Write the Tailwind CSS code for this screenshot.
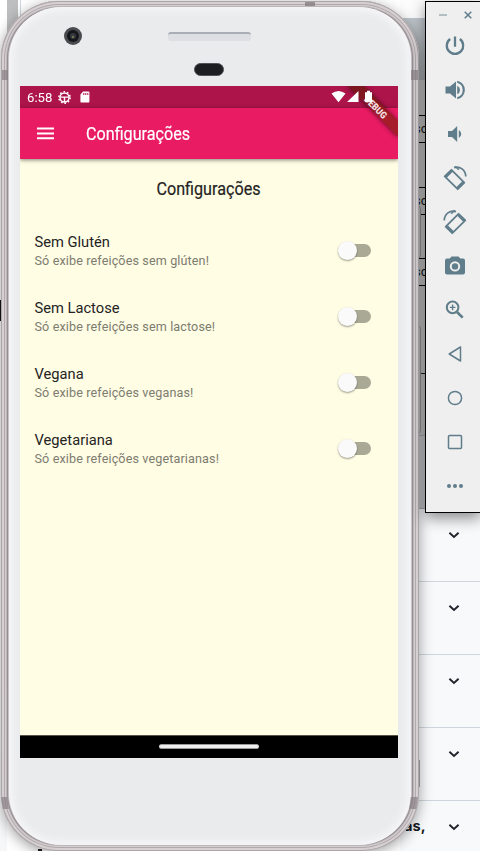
<!DOCTYPE html>
<html lang="pt-BR">
<head>
<meta charset="utf-8">
<title>Configurações</title>
<script src="https://cdn.jsdelivr.net/npm/@tailwindcss/browser@4"></script>
</head>
<body class="relative h-[851px] w-[480px] overflow-hidden bg-white font-['Roboto',sans-serif]">

<!-- Desktop behind the emulator -->
<div class="absolute inset-0 flex justify-between">
  <div class="flex h-full w-[60px]">
    <div class="w-[7px] bg-gradient-to-b from-white from-80% to-[#f6f7f9]"></div>
    <div class="h-[100px] w-[11px] bg-[#bdbebf]"></div>
    <div class="ml-[2px] h-[100px] w-px bg-[#cbd6e2]"></div>
  </div>
  <div class="flex h-full w-[80px] flex-col">
    <div class="h-[19px] shrink-0 border-b border-[#bfc8cf] bg-[#fcfcfc]"></div>
    <div class="h-[61px] shrink-0 bg-gradient-to-b from-[#c0c7cc] to-[#a8adb1]"></div>
    <div class="h-[355px] shrink-0 bg-[#c6c6c6] pl-[14px] text-[13px] leading-[26px] text-[#151515]">
      <div class="mt-[35px] h-[28px] border-y border-black">sc</div>
      <div class="mt-[44px] h-[28px] border-y border-black">sc</div>
      <div class="mt-[43px] h-[28px] border-y border-black">sc</div>
      <div class="mt-[87px] h-px bg-[#17202b]"></div>
    </div>
    <div class="h-[74px] shrink-0 border-y border-[#a9adb1] bg-[#cbccce]"></div>
    <div class="h-[365px] shrink-0 bg-[#f7f9fb]">
      <div class="flex h-[73px] items-center border-b border-[#cfd5dc] pl-[48px]"><svg class="-mt-[21px]" width="12" height="8" viewBox="0 0 12 8" fill="none" stroke="#20242a" stroke-width="1.9"><path d="M1.4 1.8 6 6l4.6-4.2"/></svg></div>
      <div class="flex h-[73px] items-center border-b border-[#cfd5dc] pl-[48px]"><svg class="-mt-[21px]" width="12" height="8" viewBox="0 0 12 8" fill="none" stroke="#20242a" stroke-width="1.9"><path d="M1.4 1.8 6 6l4.6-4.2"/></svg></div>
      <div class="flex h-[73px] items-center border-b border-[#cfd5dc] pl-[48px]"><svg class="-mt-[21px]" width="12" height="8" viewBox="0 0 12 8" fill="none" stroke="#20242a" stroke-width="1.9"><path d="M1.4 1.8 6 6l4.6-4.2"/></svg></div>
      <div class="flex h-[73px] items-center border-b border-[#cfd5dc] pl-[48px]"><svg class="-mt-[21px]" width="12" height="8" viewBox="0 0 12 8" fill="none" stroke="#20242a" stroke-width="1.9"><path d="M1.4 1.8 6 6l4.6-4.2"/></svg></div>
      <div class="flex h-[73px] items-center"><b class="-mt-[22px] w-[48px] pl-[4px] font-['Inter',sans-serif] text-[14.6px] text-[#17191c]">as,</b><svg class="-mt-[21px]" width="12" height="8" viewBox="0 0 12 8" fill="none" stroke="#20242a" stroke-width="1.9"><path d="M1.4 1.8 6 6l4.6-4.2"/></svg></div>
    </div>
  </div>
</div>
<div class="absolute left-0 top-[300px] h-[21px] w-[3px] bg-[#151515]"></div>
<div class="absolute left-[38px] top-[849px] h-[2px] w-[4px] bg-[#201c20]"></div>

<!-- Side buttons -->
<div class="absolute left-[416px] top-[205px] h-[54px] w-[5px] rounded-r-sm border border-[#999] bg-[#c9c7c7]"></div>
<div class="absolute left-[416px] top-[325px] h-[109px] w-[5px] rounded-r-sm border border-[#999] bg-[#c9c7c7]"></div>
<div class="absolute left-[417px] top-[760px] h-[27px] w-[3px] bg-[#aaa3a7]"></div>

<!-- Phone -->
<div class="absolute left-[1px] top-[1px] flex h-[850px] w-[418px] flex-col rounded-[58px] bg-[#cbc4c7] p-[8px] pb-[6px] pt-[6px] shadow-[0_3px_14px_rgba(0,0,0,0.38),inset_0_0_0_1px_#aca5a8,inset_0_0_0_3px_#d6d0d2,inset_0_0_0_4px_#b0a9ac,inset_0_0_0_5px_#d4ced0,inset_0_0_0_6px_#bdb6b9,inset_0_0_0_7px_#958e92]">
  <div class="flex flex-1 flex-col rounded-[52px] bg-[#eaebed] px-[11px] shadow-[inset_0_0_8px_3px_#f8f8fa]">
    <div class="relative h-[79px] shrink-0">
      <div class="absolute left-[44px] top-[20px] flex size-[18px] items-center justify-center rounded-full bg-[#4a4b4e]"><div class="flex size-[12px] items-center justify-center rounded-full bg-[#15171a]"><div class="size-[6px] rounded-full bg-[#353a42]"><div class="ml-[2px] mt-[3px] size-[2px] bg-[#777348]"></div></div></div></div>
      <div class="absolute left-[148px] top-[25px] h-[9px] w-[83px] rounded-[3px] border-t-2 border-[#a9adb6] bg-[#dddfe2]"></div>
      <div class="absolute left-[174px] top-[56px] h-[13px] w-[30px] rounded-full border border-[#505258] bg-[#1d1e22]"></div>
    </div>

    <main class="relative flex h-[672px] w-[378px] shrink-0 flex-col overflow-hidden bg-[#fffde4]">
      <div class="flex h-[22px] shrink-0 items-center bg-[#ad1449] pl-[7px] text-[13.6px] text-white">
        <span class="w-[31px] origin-left scale-x-[0.97]">6:58</span>
        <svg width="13" height="13" viewBox="0 0 13 13" fill="none" stroke="white"><circle cx="6.5" cy="6.5" r="4.5" stroke-width="1.5"/><circle cx="6.5" cy="6.5" r="5.7" stroke-width="1.4" stroke-dasharray="1.7 1.88"/><path d="M2.5 6.1h8M6.5 6.5v4.4" stroke-width="1.4"/></svg>
        <svg class="ml-[9px]" width="10" height="12" viewBox="0 0 10 12" fill="white"><path fill-rule="evenodd" d="M3 .5h5.6q.8 0 .8.8v9.4q0 .8-.8.8H1.2q-.8 0-.8-.8V3.4ZM3.3 2v2h1V2Zm2 0v2h1V2Zm2 0v2h1V2Z"/></svg>
      </div>
      <header class="relative z-10 flex h-[51px] shrink-0 items-center bg-[#e91b62] text-white shadow-[0_1px_4px_rgba(0,0,0,0.5)]">
        <svg class="ml-[17px]" width="17" height="13" viewBox="0 0 17 13" fill="white"><path d="M0 .6h17v2H0zM0 5.4h17v2H0zM0 10.2h17v2H0z"/></svg>
        <h1 class="ml-[32px] mt-[2px] origin-left scale-x-[0.86] whitespace-nowrap text-[18.8px] leading-none [-webkit-text-stroke:0.2px_white]">Configurações</h1>
      </header>
      <section class="flex h-[576px] shrink-0 flex-col">
        <h2 class="mt-[20px] flex h-[20px] origin-center -translate-x-[0.5px] scale-x-[0.86] items-center justify-center text-[18.8px] leading-none text-[#24231f] [-webkit-text-stroke:0.2px_#24231f]">Configurações</h2>
        <div class="mt-[18px] flex flex-col pl-[14.5px] pr-[27px]">
          <div class="flex h-[66px] items-center justify-between"><div class="pt-[2px]"><div class="text-[14.7px] leading-[19px] text-[#24231f]">Sem Glutén</div><div class="text-[12.6px] leading-[18px] tracking-[0.12px] text-[#7d7c70]">Só exibe refeições sem glúten!</div></div><div class="flex h-[13px] w-[31px] items-center rounded-full bg-[#aaa996]"><i class="-ml-[2px] size-[19px] rounded-full bg-[#fafafa] shadow-[0_1px_2px_rgba(0,0,0,0.4)]"></i></div></div>
          <div class="flex h-[66px] items-center justify-between"><div class="pt-[2px]"><div class="text-[14.7px] leading-[19px] text-[#24231f]">Sem Lactose</div><div class="text-[12.6px] leading-[18px] tracking-[0.12px] text-[#7d7c70]">Só exibe refeições sem lactose!</div></div><div class="flex h-[13px] w-[31px] items-center rounded-full bg-[#aaa996]"><i class="-ml-[2px] size-[19px] rounded-full bg-[#fafafa] shadow-[0_1px_2px_rgba(0,0,0,0.4)]"></i></div></div>
          <div class="flex h-[66px] items-center justify-between"><div class="pt-[2px]"><div class="text-[14.7px] leading-[19px] text-[#24231f]">Vegana</div><div class="text-[12.6px] leading-[18px] tracking-[0.12px] text-[#7d7c70]">Só exibe refeições veganas!</div></div><div class="flex h-[13px] w-[31px] items-center rounded-full bg-[#aaa996]"><i class="-ml-[2px] size-[19px] rounded-full bg-[#fafafa] shadow-[0_1px_2px_rgba(0,0,0,0.4)]"></i></div></div>
          <div class="flex h-[66px] items-center justify-between"><div class="pt-[2px]"><div class="text-[14.7px] leading-[19px] text-[#24231f]">Vegetariana</div><div class="text-[12.6px] leading-[18px] tracking-[0.12px] text-[#7d7c70]">Só exibe refeições vegetarianas!</div></div><div class="flex h-[13px] w-[31px] items-center rounded-full bg-[#aaa996]"><i class="-ml-[2px] size-[19px] rounded-full bg-[#fafafa] shadow-[0_1px_2px_rgba(0,0,0,0.4)]"></i></div></div>
        </div>
      </section>
      <div class="flex h-[23px] shrink-0 justify-center border-t border-[#555448] bg-black pt-[8px]"><div class="h-[5px] w-[100px] rounded-full border-y border-[#999] bg-[#eee]"></div></div>

      <!-- Debug ribbon with the status icons above it -->
      <svg class="absolute right-0 top-0 z-20" width="70" height="56" viewBox="0 0 70 56">
        <defs>
          <filter id="s" x="-20%" y="-20%" width="140%" height="140%"><feGaussianBlur stdDeviation="2"/></filter>
          <linearGradient id="r" x1="0" y1="0" x2="0" y2="1"><stop offset="0" stop-color="#7a1620"/><stop offset=".35" stop-color="#86161f"/><stop offset=".6" stop-color="#a61c2a"/></linearGradient>
        </defs>
        <path d="M19 0h17l34 35v17Z" fill="#000" opacity=".5" filter="url(#s)"/>
        <path d="M20 0h16l34 35v16Z" fill="url(#r)"/>
        <text transform="translate(35.6 14) rotate(45)" font-family="Roboto" font-weight="900" font-size="9.6" fill="#f4dfe0" textLength="27.5" lengthAdjust="spacingAndGlyphs">DEBUG</text>
        <g fill="white"><path d="M3.5 7.4Q10.5 2.4 17.5 7.4L10.5 16.2ZM30.5 4.9V16H19ZM37 6.2h2V4.8h3v1.4h2V16h-7Z"/></g>
      </svg>
    </main>
  </div>
</div>

<!-- Antenna bands on the metal frame -->
<div class="absolute left-[2px] top-[70px] h-[10px] w-[6px] bg-[#877f83]/70"></div>
<div class="absolute left-[411px] top-[70px] h-[10px] w-[7px] bg-[#877f83]/70"></div>
<div class="absolute left-[305px] top-[2px] h-[4px] w-[10px] bg-[#877f83]/80"></div>
<div class="absolute left-[2px] top-[797px] h-[12px] w-[6px] skew-x-8 bg-[#877f83]/70"></div>
<div class="absolute left-[410px] top-[797px] h-[12px] w-[7px] -skew-x-8 bg-[#877f83]/70"></div>

<!-- Emulator toolbar -->
<aside class="absolute left-[425px] top-[1px] flex h-[512px] w-[56px] flex-col border border-black bg-[#efefef] shadow-[0_5px_14px_rgba(0,0,0,0.45)]">
  <div class="flex h-[22px] shrink-0 items-center pl-[13px] pt-[4px]">
    <svg width="36" height="10" viewBox="0 0 36 10" fill="none" stroke="#607d8b"><path d="M0 5h8" stroke="#a6b5bc" stroke-width="1.7"/><path d="m25.7 1.7 6.6 6.6m0-6.6-6.6 6.6" stroke-width="1.5"/></svg>
  </div>
  <div class="flex flex-col items-center pl-[3px] text-[#607d8b]">
    <div class="flex h-[44px] items-center"><svg width="24" height="24" viewBox="0 0 24 24" fill="none" stroke="currentColor" stroke-width="2.3"><path d="M12 2.6v10.2M7.2 5a8.2 8.2 0 1 0 9.6 0"/></svg></div>
    <div class="flex h-[44px] items-center"><svg width="24" height="24" viewBox="0 0 24 24" fill="currentColor"><path d="M2.5 8.5v7H7l6 5v-17l-6 5ZM14.2 7.7v8.6a4.7 4.7 0 0 0 0-8.6Z"/><path d="M14.2 3.8a8.4 8.4 0 0 1 0 16.4" fill="none" stroke="currentColor" stroke-width="2.2"/></svg></div>
    <div class="flex h-[44px] items-center"><svg width="24" height="24" viewBox="0 0 24 24" fill="currentColor"><path d="M5 9v6h4l5.2 5V4L9 9ZM15.8 8v8a4.5 4.5 0 0 0 0-8Z"/></svg></div>
    <div class="flex h-[44px] items-center"><svg width="26" height="26" viewBox="0 0 26 26" fill="none" stroke="currentColor"><path d="M9.5 4.8 22.3 17.6l-6.6 6.6L2.7 11.4Z" stroke-width="1.8" stroke-linejoin="round"/><path d="m9.7 5.8-6 6M21.3 17.2l-6 6" stroke-width="3"/><path d="M12 2.6C18 .8 23.5 5 23.8 11.5" stroke-width="1.7"/><path d="m13.2 1.2 3.6 3.6" stroke-width="1.6"/></svg></div>
    <div class="flex h-[44px] items-center"><svg class="-scale-x-100" width="26" height="26" viewBox="0 0 26 26" fill="none" stroke="currentColor"><path d="M9.5 4.8 22.3 17.6l-6.6 6.6L2.7 11.4Z" stroke-width="1.8" stroke-linejoin="round"/><path d="m9.7 5.8-6 6M21.3 17.2l-6 6" stroke-width="3"/><path d="M12 2.6C18 .8 23.5 5 23.8 11.5" stroke-width="1.7"/><path d="m13.2 1.2 3.6 3.6" stroke-width="1.6"/></svg></div>
    <div class="flex h-[44px] items-center"><svg class="-mt-px" width="24" height="24" viewBox="0 0 24 24" fill="currentColor"><path fill-rule="evenodd" d="M8.5 2.5h7L17.3 4.6H20q2 0 2 2v11.8q0 2-2 2H4q-2 0-2-2V6.6q0-2 2-2h2.7ZM12 7.2a5.2 5.2 0 1 0 0 10.4 5.2 5.2 0 0 0 0-10.4Z"/><circle cx="12" cy="12.4" r="3.2"/></svg></div>
    <div class="flex h-[44px] items-center"><svg width="24" height="24" viewBox="0 0 24 24" fill="none" stroke="currentColor"><circle cx="9.6" cy="9.4" r="5.8" stroke-width="2"/><path d="m14 14 5.7 5.7" stroke-width="2.6"/><path d="M6.8 9.4h5.6M9.6 6.6v5.6" stroke-width="1.4"/></svg></div>
    <div class="flex h-[44px] items-center"><svg width="24" height="24" viewBox="0 0 24 24" fill="none" stroke="currentColor" stroke-width="1.5"><path d="M17.5 5v14L6.2 12Z" stroke-linejoin="round"/></svg></div>
    <div class="flex h-[44px] items-center"><svg width="24" height="24" viewBox="0 0 24 24" fill="none" stroke="currentColor" stroke-width="1.5"><circle cx="12" cy="12" r="6.6"/></svg></div>
    <div class="flex h-[44px] items-center"><svg width="24" height="24" viewBox="0 0 24 24" fill="none" stroke="currentColor" stroke-width="1.5"><rect x="5.5" y="5.5" width="13" height="13" rx="1"/></svg></div>
    <div class="flex h-[44px] items-center"><svg width="24" height="24" viewBox="0 0 24 24" fill="currentColor"><circle cx="6" cy="12" r="2"/><circle cx="12" cy="12" r="2"/><circle cx="18" cy="12" r="2"/></svg></div>
  </div>
</aside>
</body>
</html>
